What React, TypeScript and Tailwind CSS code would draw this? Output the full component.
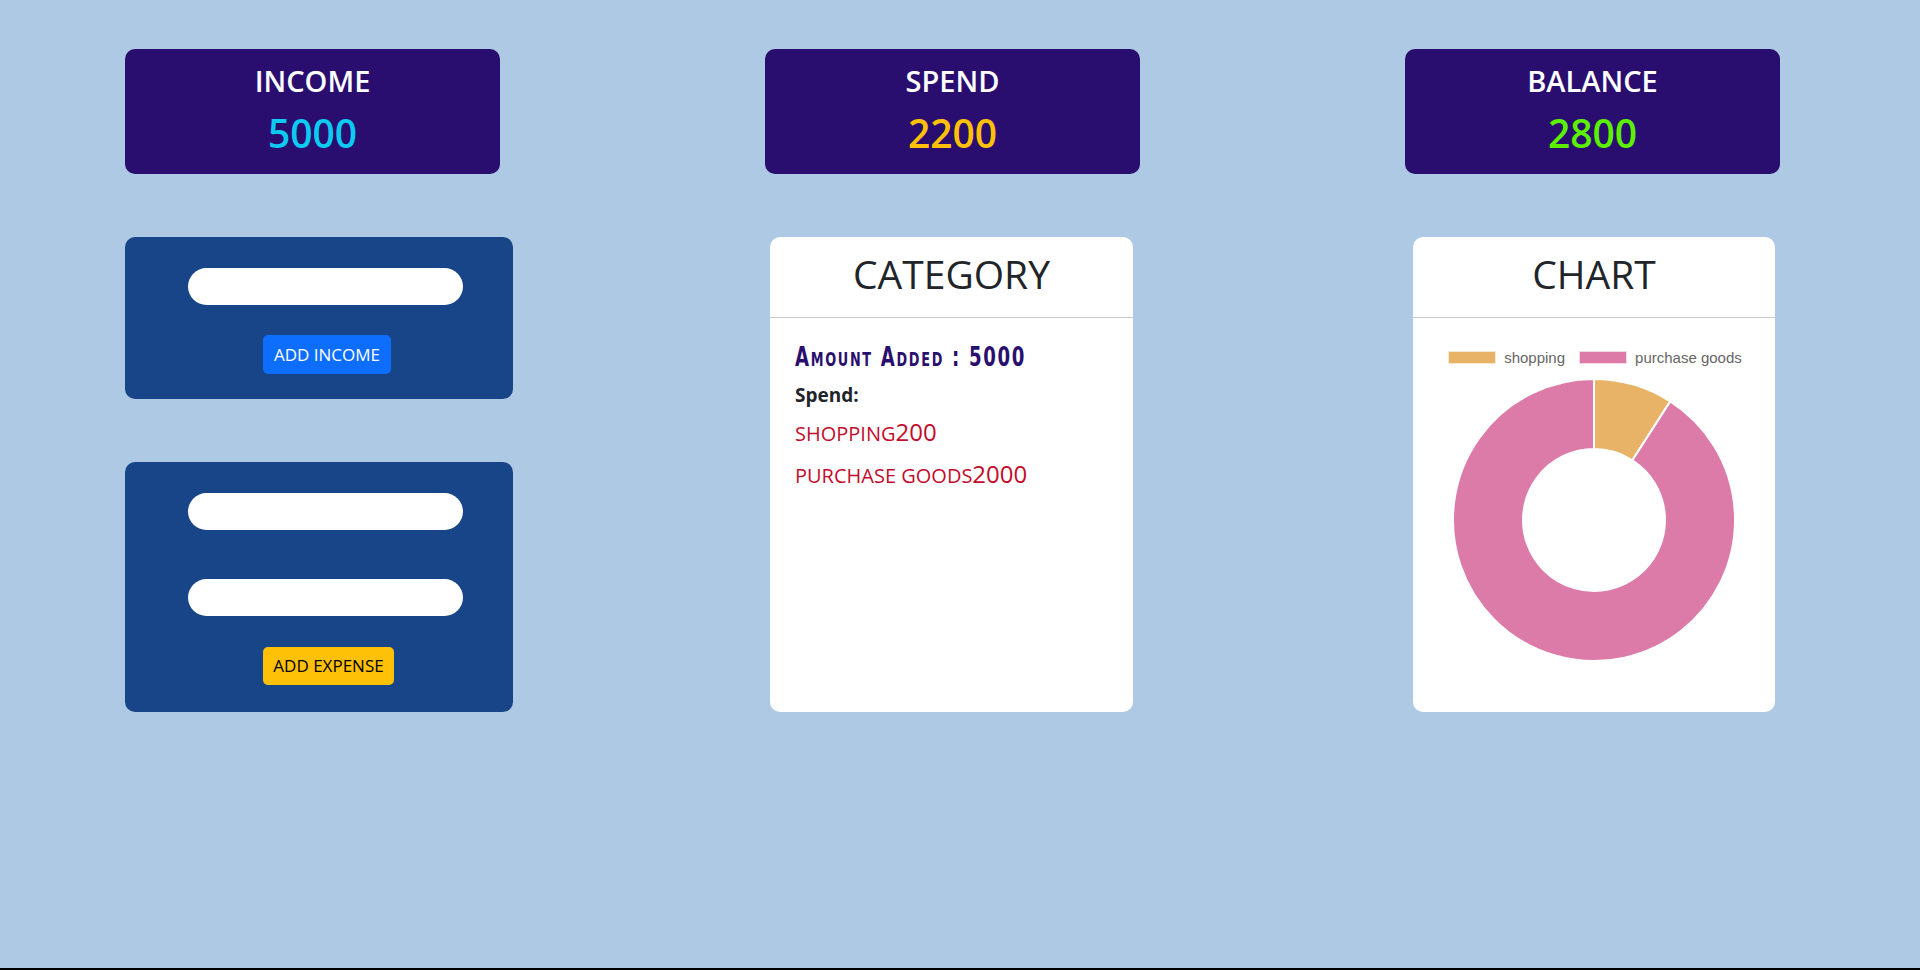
import React from "react";

const data = [
  { label: "shopping", value: 200, color: "#e8b367" },
  { label: "purchase goods", value: 2000, color: "#dc7aa8" },
];

function sector(cx: number, cy: number, R: number, r: number, a0: number, a1: number) {
  const p = (rad: number, a: number) => [cx + rad * Math.cos(a), cy + rad * Math.sin(a)];
  const large = a1 - a0 > Math.PI ? 1 : 0;
  const [x0, y0] = p(R, a0);
  const [x1, y1] = p(R, a1);
  const [x2, y2] = p(r, a1);
  const [x3, y3] = p(r, a0);
  return `M${x0} ${y0} A${R} ${R} 0 ${large} 1 ${x1} ${y1} L${x2} ${y2} A${r} ${r} 0 ${large} 0 ${x3} ${y3} Z`;
}

function Donut() {
  const total = data.reduce((s, d) => s + d.value, 0);
  let a = -Math.PI / 2;
  const c = 143;
  return (
    <svg width="286" height="286" viewBox="0 0 286 286">
      {data.map((d) => {
        const a0 = a;
        const a1 = a + (d.value / total) * Math.PI * 2;
        a = a1;
        return (
          <path key={d.label} d={sector(c, c, 141, 71, a0, a1)} fill={d.color} stroke="#ffffff" strokeWidth="2" strokeLinejoin="round" />
        );
      })}
    </svg>
  );
}

function StatCard({ title, value, color }: { title: string; value: string; color: string }) {
  return (
    <div className="ml-[125px] w-[375px] h-[125px] rounded-[10px] bg-[#290e70] flex flex-col items-center pt-[15px]">
      <div className="text-white text-[29px] leading-[34px] font-semibold">{title}</div>
      <div className={`${color} mt-[11px] text-[39px] leading-[48px] font-semibold`}>{value}</div>
    </div>
  );
}

export default function App() {
  return (
    <div className="h-[970px] bg-[#aec9e3] border-b-2 border-black font-['Open_Sans',sans-serif] text-[#212529]">
      <div className="grid grid-cols-3 pt-[49px]">
        <div>
          <StatCard title="INCOME" value="5000" color="text-[#0dcaf0]" />
        </div>
        <div>
          <StatCard title="SPEND" value="2200" color="text-[#ffc107]" />
        </div>
        <div>
          <StatCard title="BALANCE" value="2800" color="text-[#5cf000]" />
        </div>
      </div>

      <div className="grid grid-cols-3 mt-[63px]">
        <div className="flex flex-col gap-[63px]">
          <div className="ml-[125px] w-[388px] h-[162px] rounded-[10px] bg-[#184488] pl-[63px] pt-[31px]">
            <input className="block w-[275px] h-[37px] rounded-full bg-white outline-none px-4" />
            <div className="w-[275px] flex justify-center pl-[3px] mt-[30px]">
              <button className="h-[39px] w-[128px] rounded-[5px] bg-[#0d6efd] text-white text-[17px] leading-[39px] whitespace-nowrap">
                ADD INCOME
              </button>
            </div>
          </div>
          <div className="ml-[125px] w-[388px] h-[250px] rounded-[10px] bg-[#184488] pl-[63px] pt-[31px]">
            <input className="block w-[275px] h-[37px] rounded-full bg-white outline-none px-4" />
            <input className="block w-[275px] h-[37px] rounded-full bg-white outline-none px-4 mt-[49px]" />
            <div className="w-[275px] flex justify-center pl-[6px] mt-[31px]">
              <button className="h-[38px] w-[131px] rounded-[5px] bg-[#ffc107] text-black text-[17px] leading-[38px] whitespace-nowrap">
                ADD EXPENSE
              </button>
            </div>
          </div>
        </div>

        <div>
          <div className="ml-[130px] w-[363px] h-[475px] rounded-[10px] bg-white overflow-hidden">
            <div className="h-[81px] border-b border-[#c8c8c8] flex justify-center pt-[13px]">
              <div className="text-[39px] leading-[48px] font-medium text-[#212529]">CATEGORY</div>
            </div>
            <div className="pl-[25px] pt-[26px]">
              <div className="whitespace-nowrap font-['DejaVu_Sans_Condensed','Liberation_Sans_Narrow',sans-serif] font-bold text-[24px] leading-[30px] tracking-[2px] text-[#2a0f6e] [font-variant:small-caps] [transform:scale(0.84,1.1)] origin-bottom-left">
                Amount Added : 5000
              </div>
              <div className="mt-[8px] font-bold text-[19px] leading-[26px] text-[#212529]">Spend:</div>
              <div className="mt-[4px] text-[24px] leading-[40px] text-[#c40c2c] whitespace-nowrap">
                <span className="text-[20px]">SHOPPING</span>200
              </div>
              <div className="text-[24px] leading-[40px] text-[#c40c2c] whitespace-nowrap">
                <span className="text-[20px]">PURCHASE GOODS</span>2000
              </div>
            </div>
          </div>
        </div>

        <div>
          <div className="ml-[133px] w-[362px] h-[475px] rounded-[10px] bg-white overflow-hidden">
            <div className="h-[81px] border-b border-[#c8c8c8] flex justify-center pt-[13px]">
              <div className="text-[39px] leading-[48px] font-medium text-[#212529]">CHART</div>
            </div>
            <div className="flex flex-col items-center pt-[31px]">
              <div className="flex items-center h-[17px] font-['Liberation_Sans',Arial,sans-serif] text-[15px] leading-[17px] text-[#666666] pl-[2px]">
                {data.map((d, i) => (
                  <div key={d.label} className={`flex items-center ${i > 0 ? "ml-[14px]" : ""}`}>
                    <span className="block w-[48px] h-[13px] border border-white/70" style={{ backgroundColor: d.color }} />
                    <span className="ml-[8px]">{d.label}</span>
                  </div>
                ))}
              </div>
              <div className="mt-[11px]">
                <Donut />
              </div>
            </div>
          </div>
        </div>
      </div>
    </div>
  );
}
